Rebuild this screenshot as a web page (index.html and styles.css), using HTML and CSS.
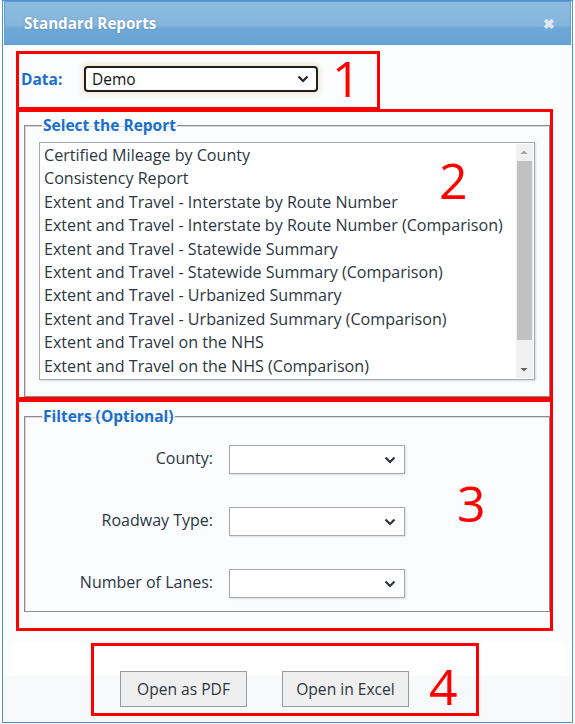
FILE: index.html
```html
<!DOCTYPE html>
<html>
<head>
<meta charset="utf-8">
<link rel="stylesheet" href="styles.css">
</head>
<body>
<div class="window">
  <div class="titlebar">
    <span class="title">Standard Reports</span>
    <span class="close">&#x2716;</span>
  </div>
  <div class="content">
    <div class="mark mark1">
      <label class="data-label">Data:</label>
      <div class="select demo"><span>Demo</span><svg class="chev" width="12" height="8" viewBox="0 0 12 8"><path d="M1.5 1.5 L6 6 L10.5 1.5" fill="none" stroke="#222" stroke-width="2.2"/></svg></div>
      <span class="num n1">1</span>
    </div>
    <div class="mark mark2">
      <fieldset class="group report">
        <legend>Select the Report</legend>
        <div class="listbox">
          <ul class="items">
            <li>Certified Mileage by County</li>
            <li>Consistency Report</li>
            <li>Extent and Travel - Interstate by Route Number</li>
            <li>Extent and Travel - Interstate by Route Number (Comparison)</li>
            <li>Extent and Travel - Statewide Summary</li>
            <li>Extent and Travel - Statewide Summary (Comparison)</li>
            <li>Extent and Travel - Urbanized Summary</li>
            <li>Extent and Travel - Urbanized Summary (Comparison)</li>
            <li>Extent and Travel on the NHS</li>
            <li>Extent and Travel on the NHS (Comparison)</li>
          </ul>
          <div class="scrollbar">
            <svg class="arrow" width="16" height="17" viewBox="0 0 16 17"><path d="M4.5 10 L8 6.5 L11.5 10 Z" fill="#a3a3a3"/></svg>
            <div class="thumb"></div>
            <div class="track"></div>
            <svg class="arrow" width="16" height="17" viewBox="0 0 16 17"><path d="M4.5 7 L8 10.5 L11.5 7 Z" fill="#606060"/></svg>
          </div>
        </div>
      </fieldset>
      <span class="num n2">2</span>
    </div>
    <div class="mark mark3">
      <fieldset class="group filters">
        <legend>Filters (Optional)</legend>
        <div class="rows">
          <label>County:</label>
          <div class="select small"><svg class="chev" width="12" height="8" viewBox="0 0 12 8"><path d="M1.5 1.5 L6 6 L10.5 1.5" fill="none" stroke="#2a3440" stroke-width="2.2"/></svg></div>
          <label>Roadway Type:</label>
          <div class="select small"><svg class="chev" width="12" height="8" viewBox="0 0 12 8"><path d="M1.5 1.5 L6 6 L10.5 1.5" fill="none" stroke="#2a3440" stroke-width="2.2"/></svg></div>
          <label>Number of Lanes:</label>
          <div class="select small"><svg class="chev" width="12" height="8" viewBox="0 0 12 8"><path d="M1.5 1.5 L6 6 L10.5 1.5" fill="none" stroke="#2a3440" stroke-width="2.2"/></svg></div>
        </div>
      </fieldset>
      <span class="num n3">3</span>
    </div>
    <div class="footer">
      <div class="mark mark4">
        <button class="btn">Open as PDF</button>
        <button class="btn">Open in Excel</button>
        <span class="num n4">4</span>
      </div>
    </div>
  </div>
</div>
</body>
</html>
```
FILE: styles.css
```css
* { box-sizing: border-box; }
html, body { margin: 0; padding: 0; background: #ffffff; }
body { font-family: "Open Sans", "Noto Sans", sans-serif; }

.window {
  margin-left: 2px;
  width: 571px;
  height: 723px;
  border: 1px solid #4d90d2;
  background: #fafcfd;
  display: flex;
  flex-direction: column;
}

.titlebar {
  margin: 0 1px;
  height: 44px;
  border: 1px solid #5f9fd6;
  background: linear-gradient(to bottom, #8dbbdf 0%, #86b6dd 55%, #6fa8d7 62%, #67a3d5 100%);
  display: flex;
  align-items: center;
  justify-content: space-between;
  padding: 0 15px 0 19px;
}
.title {
  color: #ffffff;
  font-weight: 700;
  font-size: 15.2px;
  text-shadow: 0 0 2px rgba(60,110,160,0.6);
}
.close {
  color: #dce9f5;
  font-size: 14px;
  font-weight: 700;
}

.content {
  flex: 1;
  display: flex;
  flex-direction: column;
  padding-left: 13px;
  position: relative;
}

.mark {
  border: 3px solid #ff0000;
  position: relative;
}
.num {
  position: absolute;
  color: #ff0000;
  font-family: "Open Sans", sans-serif;
  font-size: 50px;
  line-height: 1;
}

.mark1 {
  margin-top: 6px;
  width: 364px;
  height: 59px;
  display: flex;
  align-items: center;
  padding: 0 0 4px 2px;
}
.data-label {
  color: #1a6fce;
  font-weight: 700;
  font-size: 15.5px;
  width: 63px;
}
.select {
  display: flex;
  align-items: center;
  justify-content: space-between;
  background: #fff;
}
.demo {
  width: 234px;
  height: 26px;
  border: 2px solid #1e1e1e;
  border-radius: 4px;
  box-shadow: 0 0 5px 2px rgba(230, 200, 150, 0.45);
  padding: 0 7px 0 6px;
  font-size: 15.5px;
  color: #111;
}
.n1 { left: 313px; top: -1px; }

.mark2 {
  margin-top: -1px;
  width: 537px;
  height: 291px;
  padding: 4px 0 0 5px;
}
.group {
  margin: 0;
  border: 1px solid #8c8c8c;
  box-shadow: inset 1px 1px 0 #d8d8d8;
  padding: 0 0 0 14px;
}
.group legend {
  color: #1a6fce;
  font-weight: 700;
  font-size: 15.5px;
  padding: 0 1px 0 1px;
  margin-left: 3px;
  line-height: 18px;
}
.report {
  width: 526px;
  height: 281px;
  padding-top: 8px;
}
.listbox {
  width: 496px;
  height: 238px;
  border: 1px solid #a8a8a8;
  box-shadow: 1px 1px 2px rgba(0,0,0,0.15);
  background: #fff;
  display: flex;
}
.items {
  list-style: none;
  margin: 0;
  padding: 1px 0 0 4px;
  flex: 1;
  font-size: 16.1px;
  color: #2c3642;
}
.items li {
  height: 23.4px;
  line-height: 23.4px;
  white-space: nowrap;
}
.scrollbar {
  width: 17px;
  background: #f0f0f0;
  display: flex;
  flex-direction: column;
  margin: 1px 1px 1px 0;
}
.arrow { display: block; flex: none; }
.thumb {
  height: 179px;
  margin: 0 1px 0 1px;
  background: #c1c1c1;
}
.track { flex: 1; }
.n2 { left: 420px; top: 43px; }

.mark3 {
  width: 537px;
  height: 232px;
  margin-top: -1px;
  padding: 5px 0 0 5px;
}
.filters {
  width: 526px;
  height: 205px;
}
.rows {
  display: grid;
  grid-template-columns: 174px 176px;
  column-gap: 16px;
  row-gap: 33px;
  align-items: center;
  padding-top: 20px;
}
.rows label {
  justify-self: end;
  font-size: 16px;
  color: #2c3642;
  margin-top: -3px;
}
.small {
  height: 29px;
  border: 1px solid #a9a9a9;
  box-shadow: 1px 1px 2px rgba(0,0,0,0.12);
  justify-content: flex-end;
  padding-right: 8px;
}
.n3 { left: 438px; top: 76px; }

.footer {
  margin-top: 12px;
  margin-left: -13px;
  flex: 1;
  display: flex;
  justify-content: flex-start;
  padding-left: 88px;
  background: linear-gradient(to bottom, #ffffff 0%, #ffffff 40%, #f8f9fa 42%, #f8f9fa 100%);
}
.mark4 {
  width: 388px;
  height: 73px;
  display: flex;
  align-items: flex-end;
  padding: 0 0 6px 26px;
  gap: 35px;
}
.btn {
  width: 127px;
  height: 36px;
  border: 1px solid #9a9a9a;
  background: #efefef;
  font-family: "Open Sans", sans-serif;
  font-size: 15.6px;
  color: #2c3642;
  padding: 0;
}
.n4 { left: 335px; top: 15px; }
```
